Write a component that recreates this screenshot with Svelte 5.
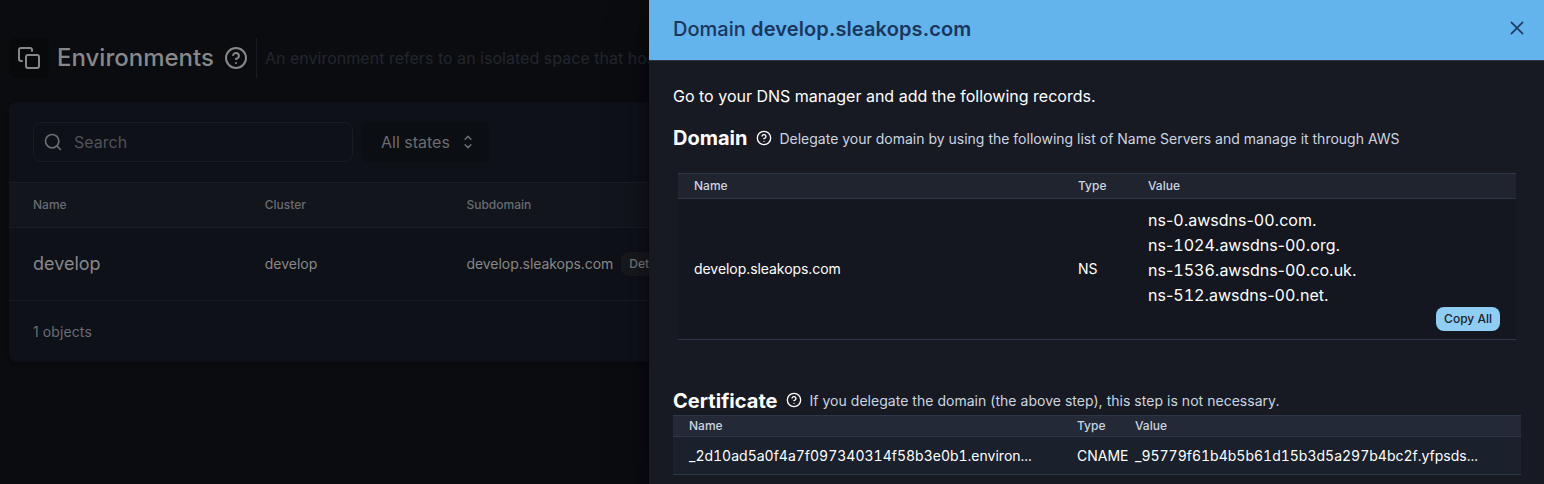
<script>
  const nameServers = [
    'ns-0.awsdns-00.com.',
    'ns-1024.awsdns-00.org.',
    'ns-1536.awsdns-00.co.uk.',
    'ns-512.awsdns-00.net.'
  ];

  const splitDigits = (text) => text.split(/(\d+)/);
</script>

{#snippet help(size)}
  <svg class="help" width={size} height={size} viewBox="0 0 24 24" fill="none" stroke="currentColor" stroke-width="2" stroke-linecap="round" stroke-linejoin="round">
    <circle cx="12" cy="12" r="10" />
    <path d="M9.09 9a3 3 0 0 1 5.83 1c0 2-3 3-3 3" />
    <path d="M12 17h.01" />
  </svg>
{/snippet}

<div class="app">
  <main class="page">
    <header class="page-head">
      <span class="head-icon">
        <svg width="24" height="24" viewBox="0 0 24 24" fill="none" stroke="currentColor" stroke-width="2" stroke-linecap="round" stroke-linejoin="round">
          <rect x="9" y="9" width="13" height="13" rx="2" />
          <path d="M5 15H4a2 2 0 0 1-2-2V4a2 2 0 0 1 2-2h9a2 2 0 0 1 2 2v1" />
        </svg>
      </span>
      <h1>Environments</h1>
      {@render help(24)}
      <p>An environment refers to an isolated space that hosts</p>
    </header>

    <section class="card">
      <div class="filters">
        <div class="search">
          <svg width="20" height="20" viewBox="0 0 24 24" fill="none" stroke="currentColor" stroke-width="2" stroke-linecap="round" stroke-linejoin="round">
            <circle cx="11" cy="11" r="8" />
            <path d="M21 21l-4.35-4.35" />
          </svg>
          <span>Search</span>
        </div>
        <div class="select">
          <span>All states</span>
          <svg width="10" height="14" viewBox="0 0 10 14" fill="none" stroke="currentColor" stroke-width="1.5" stroke-linecap="round" stroke-linejoin="round">
            <path d="M2.1 4.2L5 1.4l2.9 2.8M2.1 9.8L5 12.6l2.9-2.8" />
          </svg>
        </div>
      </div>
      <div class="env-row env-head">
        <span>Name</span><span>Cluster</span><span>Subdomain</span>
      </div>
      <div class="env-row env-body">
        <span class="env-name">develop</span>
        <span>develop</span>
        <span class="sub"><span class="host">develop.sleakops.com</span> <button>Details</button></span>
      </div>
      <footer>1 objects</footer>
    </section>
  </main>

  <aside class="drawer">
    <header class="drawer-head">
      <h2>Domain <b>develop.sleakops.com</b></h2>
      <svg width="14" height="14" viewBox="0 0 14 14" fill="none" stroke="currentColor" stroke-width="1.5" stroke-linecap="round">
        <path d="M1.4 1.4l11.2 11.2M12.6 1.4L1.4 12.6" />
      </svg>
    </header>
    <div class="drawer-body">
      <p class="intro">Go to your DNS manager and add the following records.</p>

      <div class="section-title">
        <h3>Domain</h3>
        {@render help(16)}
        <span>Delegate your domain by using the following list of Name Servers and manage it through AWS</span>
      </div>
      <div class="records domain">
        <div class="row head"><span>Name</span><span>Type</span><span>Value</span></div>
        <div class="row body">
          <span class="host">develop.sleakops.com</span>
          <span>NS</span>
          <div class="servers">
            {#each nameServers as server}
              <div>{#each splitDigits(server) as part, i}<span class:digits={i % 2 === 1}>{part}</span>{/each}</div>
            {/each}
            <button>Copy All</button>
          </div>
        </div>
      </div>

      <div class="section-title cert-title">
        <h3>Certificate</h3>
        {@render help(16)}
        <span>If you delegate the domain (the above step), this step is not necessary.</span>
      </div>
      <div class="records certificate">
        <div class="row head"><span>Name</span><span>Type</span><span>Value</span></div>
        <div class="row body digits">
          <span>_2d10ad5a0f4a7f097340314f58b3e0b1.environ...</span>
          <span>CNAME</span>
          <span>_95779f61b4b5b61d15b3d5a297b4bc2f.yfpsds...</span>
        </div>
      </div>
    </div>
  </aside>
</div>

<style>
  :global(body) { background: #0b0c10; }
  .app {
    position: relative;
    height: 484px;
    overflow: hidden;
    background: #0b0c10;
    color: #878889;
    font-family: Inter, sans-serif;
    font-size: 16px;
    line-height: 24px;
    white-space: nowrap;
  }
  .app *, .app { box-sizing: border-box; }
  h1, h2, h3, p { margin: 0; }
  svg { display: block; flex: none; }
  button { border: 0; font-family: inherit; font-size: 12px; font-weight: 500; line-height: 24px; height: 24px; padding: 0 8px; border-radius: 8px; }
  .host { letter-spacing: -.06px; }
  .digits { font-variant-numeric: tabular-nums; }

  .page { padding: 38px 9px 0; width: 1544px; }
  .page-head { display: flex; align-items: center; height: 40px; }
  .head-icon { width: 40px; height: 40px; border-radius: 8px; background: #08090b; display: grid; place-items: center; margin-right: 8px; }
  h1 { font-size: 24px; font-weight: 500; line-height: 32px; margin-right: 10px; }
  .page-head p { height: 40px; line-height: 40px; border-left: 1px solid #171b23; padding-left: 8px; margin-left: 8px; color: #22262e; letter-spacing: .02px; }

  .card { margin-top: 24px; height: 260px; border-radius: 8px; background: #0e1118; box-shadow: 0 2px 4px rgba(0, 0, 0, .3); }
  .filters { display: flex; gap: 8px; padding: 20px 24px; }
  .search { width: 320px; height: 40px; border: 1px solid #181c25; border-radius: 8px; display: flex; align-items: center; gap: 11px; padding-left: 9px; color: #4f535a; }
  .search svg { color: #6a6c70; }
  .select { width: 128px; height: 40px; border-radius: 8px; background: #0b0e12; display: flex; align-items: center; justify-content: space-between; padding: 0 16px 0 20px; color: #6a6c70; }
  .env-row { display: grid; grid-template-columns: 231.7px 201.8px 1fr; align-items: center; padding-left: 24px; }
  .env-head { height: 46px; background: #12151c; border-top: 1px solid #191d26; border-bottom: 1px solid #191d26; font-size: 12px; font-weight: 500; color: #696c72; }
  .env-body { height: 73px; border-bottom: 1px solid #191d26; font-size: 14px; }
  .env-name { font-size: 18px; }
  .sub { display: flex; align-items: center; gap: 8px; }
  .sub button { background: #17191d; color: #77787a; }
  footer { padding: 19px 24px; font-size: 14px; color: #696c72; letter-spacing: .1px; }

  .drawer { position: absolute; top: 0; right: 0; width: 895px; height: 484px; background: #181a23; color: #fff; box-shadow: 0 0 0 1px rgba(0, 0, 0, .1), 0 5px 10px rgba(0, 0, 0, .2), 0 15px 40px rgba(0, 0, 0, .4); }
  .drawer-head { display: flex; justify-content: space-between; align-items: center; height: 61px; padding: 0 20px 3px 24px; background: #63b3ed; border-bottom: 1px solid #2d3748; color: #1a365d; }
  h2 { font-size: 20px; font-weight: 500; line-height: 28px; }
  h2 b { font-weight: 600; letter-spacing: .12px; }
  .drawer-head svg { margin-top: -2px; }
  .drawer-body { padding: 23px 23px 0 24px; }
  .section-title { display: flex; align-items: center; gap: 8px; height: 30px; font-size: 14px; color: #cbd5e0; }
  .section-title h3 { font-size: 20px; font-weight: 700; color: #fff; }
  .section-title .help { color: #fff; margin: 0 -1px 0 1px; }
  .section-title span { padding-top: 2px; }
  .cert-title h3 { padding-top: 1px; letter-spacing: .03px; }
  .cert-title span { letter-spacing: .03px; }
  .intro { margin-bottom: 15px; }
  .row { display: grid; padding: 0 16px; align-items: center; font-size: 14px; border-bottom: 1px solid #2d3748; }
  .head { font-size: 12px; font-weight: 500; color: #cbd5e0; border-top: 1px solid #2d3748; }
  .domain { margin: 20px 5px 45px; }
  .domain .row { grid-template-columns: 384px 70px 1fr; }
  .domain .head { height: 26px; background: #20242f; }
  .domain .body { height: 141px; background: #14171f; }
  .servers { font-size: 16px; line-height: 25px; padding-top: 1px; }
  .servers button { display: block; margin-left: auto; margin-top: -1px; background: #90cdf4; color: #1a202c; }
  .certificate .row { grid-template-columns: 388px 58px 1fr; }
  .certificate .head { height: 22px; background: #232936; line-height: 16px; padding-bottom: 1px; }
  .certificate .body { height: 38px; background: #1a202c; }
</style>
